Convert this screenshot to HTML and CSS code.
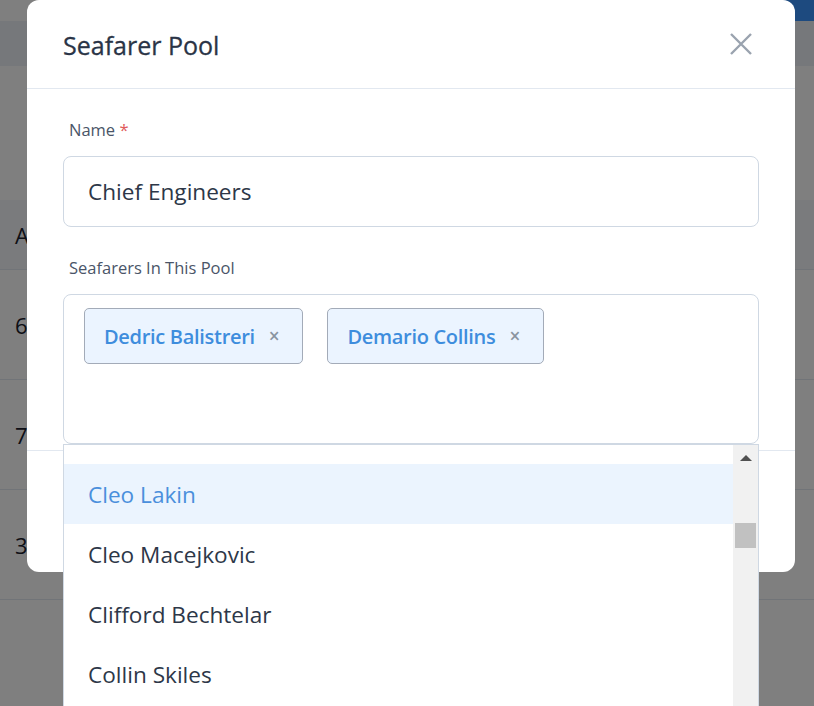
FILE: index.html
```html
<!DOCTYPE html>
<html lang="en">
<head>
<meta charset="utf-8">
<title>Seafarer Pool</title>
<link rel="stylesheet" href="styles.css">
</head>
<body>
<div class="page">
  <div class="topbar"><div class="topbar-btn"></div></div>
  <div class="subbar"></div>
  <div class="page-spacer"></div>
  <div class="table">
    <div class="trow thead"><span>A</span></div>
    <div class="trow"><span>6</span></div>
    <div class="trow"><span>7</span></div>
    <div class="trow"><span>3</span></div>
  </div>
</div>
<div class="overlay"></div>
<div class="modal">
  <div class="modal-header">
    <h2 class="modal-title">Seafarer Pool</h2>
    <button class="close-btn" aria-label="Close">
      <svg width="24" height="24" viewBox="0 0 24 24"><path d="M2 2 L22 22 M22 2 L2 22" stroke="currentColor" stroke-width="2.4" stroke-linecap="butt" fill="none"/></svg>
    </button>
  </div>
  <div class="modal-body">
    <label class="field-label">Name <span class="req">*</span></label>
    <div class="text-input">Chief Engineers</div>
    <label class="field-label second">Seafarers In This Pool</label>
    <div class="multiselect">
      <div class="tags">
        <span class="tag">Dedric Balistreri <span class="tag-x">×</span></span>
        <span class="tag">Demario Collins <span class="tag-x">×</span></span>
      </div>
      <div class="dropdown">
        <ul class="options">
          <li class="option active">Cleo Lakin</li>
          <li class="option">Cleo Macejkovic</li>
          <li class="option">Clifford Bechtelar</li>
          <li class="option">Collin Skiles</li>
        </ul>
        <div class="scrollbar">
          <div class="sb-arrow"></div>
          <div class="sb-thumb"></div>
        </div>
      </div>
    </div>
  </div>
  <div class="modal-footer"></div>
</div>
</body>
</html>
```

FILE: styles.css
```css
* { box-sizing: border-box; }
html, body { margin: 0; padding: 0; }
body {
  width: 814px;
  height: 706px;
  overflow: hidden;
  font-family: "Open Sans", "Noto Sans", "Liberation Sans", sans-serif;
  background: #ffffff;
  position: relative;
}
.page { width: 814px; }
.topbar {
  height: 21px;
  background: #ffffff;
  display: flex;
  justify-content: flex-end;
}
.topbar-btn { width: 40px; background: #3a94fe; }
.subbar { height: 45px; background: #edf0f6; }
.page-spacer { height: 134px; }
.trow {
  height: 110px;
  border-bottom: 1px solid #e2e8f0;
  display: flex;
  align-items: center;
  padding-left: 15px;
  font-size: 22px;
  color: #1a202c;
}
.thead { height: 70px; background: #f5f7fa; }
.overlay {
  position: absolute;
  inset: 0;
  background: rgba(0, 0, 0, 0.5);
}
.modal {
  position: absolute;
  left: 27px;
  top: 0;
  width: 768px;
  height: 572px;
  background: #ffffff;
  border-radius: 12px;
  display: flex;
  flex-direction: column;
}
.modal-header {
  height: 89px;
  border-bottom: 1px solid #e2e8f0;
  display: flex;
  align-items: center;
  justify-content: space-between;
  padding: 0 42px 0 36px;
}
.modal-title {
  margin: 0;
  font-size: 25px;
  font-weight: 400;
  color: #2a3446;
  -webkit-text-stroke: 0.3px #2a3446;
  padding-top: 2px;
}
.close-btn {
  border: 0;
  background: none;
  padding: 0;
  color: #9aa3af;
  width: 24px;
  height: 24px;
  margin-top: -1px;
  display: flex;
}
.modal-body {
  padding: 29px 36px 6px 36px;
  display: flex;
  flex-direction: column;
}
.field-label {
  font-size: 16.5px;
  line-height: 24px;
  color: #4a5568;
  margin: 0 0 14px 6px;
}
.field-label.second { margin-top: 29px; }
.req { color: #e05a5a; }
.text-input {
  height: 71px;
  border: 1px solid #cfd8e3;
  border-radius: 8px;
  padding: 0 24px;
  display: flex;
  align-items: center;
  font-size: 22.6px;
  color: #2d3748;
}
.multiselect {
  position: relative;
  height: 150px;
  border: 1px solid #cfd8e3;
  border-radius: 8px;
  padding: 13px 20px;
}
.tags { display: flex; gap: 24px; }
.tag {
  height: 56px;
  display: inline-flex;
  align-items: center;
  padding: 0 23px 0 19px;
  background: #ebf4ff;
  border: 1px solid #a3abb8;
  border-radius: 5px;
  font-size: 20px;
  font-weight: 600;
  color: #3e8ddd;
  letter-spacing: -0.3px;
}
.tag-x {
  margin-left: 14px;
  font-size: 19px;
  font-weight: 600;
  color: #8a93a0;
}
.dropdown {
  position: absolute;
  left: -1px;
  right: -1px;
  top: 149px;
  height: 262px;
  background: #ffffff;
  border: 1px solid #cfd8e3;
  border-bottom: 0;
  display: flex;
}
.options {
  list-style: none;
  margin: 0;
  padding: 19px 0 0 0;
  flex: 1;
}
.option {
  height: 60px;
  display: flex;
  align-items: center;
  padding-left: 24px;
  padding-top: 1px;
  font-size: 22.6px;
  color: #2d3748;
}
.option.active { background: #ebf4fe; color: #4a8fdc; }
.scrollbar {
  width: 25px;
  background: #f1f1f1;
  display: flex;
  flex-direction: column;
  align-items: center;
  padding-top: 10px;
}
.sb-arrow {
  width: 0;
  height: 0;
  border-left: 6px solid transparent;
  border-right: 6px solid transparent;
  border-bottom: 6px solid #505050;
}
.sb-thumb {
  margin-top: 62px;
  width: 21px;
  height: 25px;
  background: #c1c1c1;
}
.modal-footer {
  flex: 1;
  border-top: 1px solid #e2e8f0;
}
```
